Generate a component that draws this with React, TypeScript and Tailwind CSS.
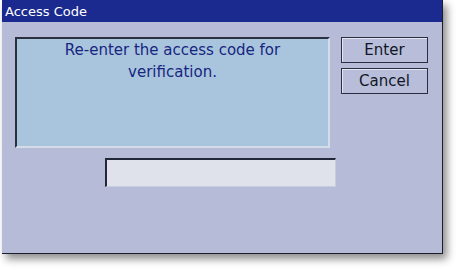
import React from "react";

const App: React.FC = () => {
  return (
    <div className="w-[459px] h-[270px] bg-white overflow-hidden" style={{ fontFamily: '"DejaVu Sans", Verdana, sans-serif' }}>
      <div className="ml-[2px] w-[441px] h-[254px] bg-[#b6bcd8] border-r border-b border-[#1c1c2c] shadow-[4px_5px_8px_rgba(0,0,0,0.45)] flex flex-col">
        {/* title bar */}
        <div className="h-[22px] bg-[#1b2a8e] flex items-center pl-[3px]">
          <span className="text-white text-[13px] leading-none">Access Code</span>
        </div>

        <div className="flex pt-[15px] pl-[13px]">
          {/* message */}
          <div className="w-[315px] h-[111px] bg-[#a9c5de] border-t-2 border-l-2 border-t-[#2a3040] border-l-[#2a3040] border-b-2 border-r-2 border-b-[#d4dcea] border-r-[#d4dcea] flex justify-center">
            <p className="text-[#18257f] text-[15px] leading-[22px] text-center w-[270px]">
              Re-enter the access code for verification.
            </p>
          </div>

          {/* buttons */}
          <div className="ml-[11px] flex flex-col gap-[5px]">
            <button className="w-[87px] h-[26px] border border-[#2a2e40] bg-[#b8bed9] shadow-[inset_1px_1px_0_#e2e6f2] text-[15px] text-[#111626] leading-none">
              Enter
            </button>
            <button className="w-[87px] h-[26px] border border-[#2a2e40] bg-[#b8bed9] shadow-[inset_1px_1px_0_#e2e6f2] text-[15px] text-[#111626] leading-none">
              Cancel
            </button>
          </div>
        </div>

        {/* input */}
        <div className="ml-[103px] mt-[10px] w-[231px] h-[29px] bg-[#dfe2ea] border-t-2 border-l-2 border-t-[#22283a] border-l-[#22283a] border-b border-r border-b-[#c8cede] border-r-[#c8cede]" />
      </div>
    </div>
  );
};

export default App;
